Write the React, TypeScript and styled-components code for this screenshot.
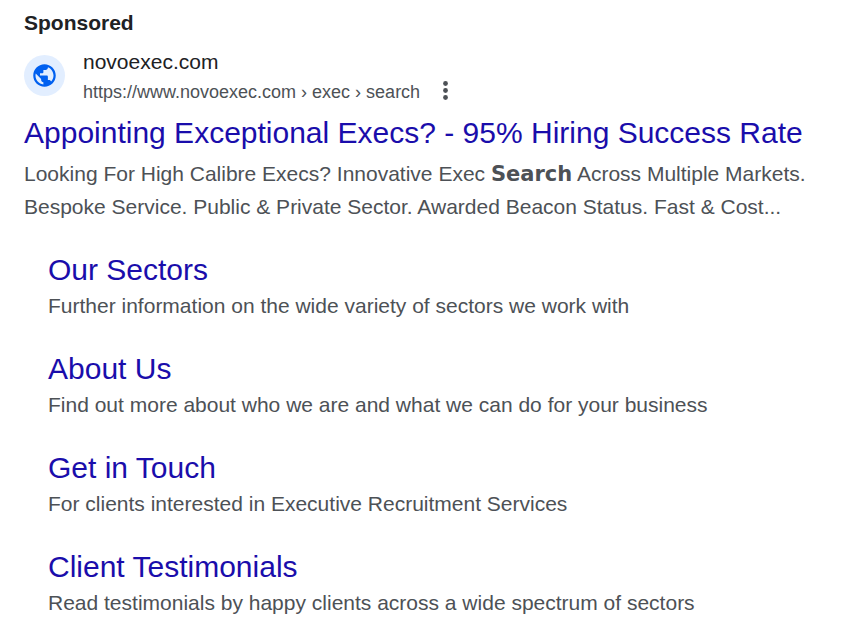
import React from 'react';
import styled, { createGlobalStyle } from 'styled-components';

const GlobalStyle = createGlobalStyle`
  * { box-sizing: border-box; }
  body {
    margin: 0;
    background: #ffffff;
    color: #4d5156;
    font-family: "Liberation Sans", Arial, sans-serif;
  }
`;

const Result = styled.main`
  padding: 8px 24px 8px;
`;

const Label = styled.div`
  color: #202124;
  font-size: 21px;
  line-height: 30px;
  font-weight: 700;
`;

const Source = styled.header`
  display: flex;
  align-items: flex-start;
  gap: 18px;
  margin-top: 9px;
`;

const Favicon = styled.span`
  display: flex;
  flex: none;
  align-items: center;
  justify-content: center;
  width: 41px;
  height: 41px;
  margin-top: 8px;
  border-radius: 50%;
  background: #e2eeff;
`;

const SiteName = styled.div`
  color: #202124;
  font-size: 21px;
  line-height: 30px;
`;

const AddressRow = styled.div`
  display: flex;
  align-items: center;
  gap: 16px;
`;

const Address = styled.cite`
  font-size: 18px;
  line-height: 30px;
  font-style: normal;
`;

const MenuButton = styled.button`
  display: flex;
  padding: 0;
  border: 0;
  background: none;
  color: #4d5156;
  cursor: pointer;
`;

const TitleLink = styled.a`
  display: block;
  color: #1a0dab;
  font-size: 30px;
  line-height: 39px;
  text-decoration: none;
  &:hover { text-decoration: underline; }
`;

const Headline = styled.h3`
  margin: 6px 0 5px;
  font-weight: 400;
`;

const Description = styled.p`
  margin: 0;
  font-size: 21px;
  line-height: 33px;
`;

const Strong = styled.strong`
  font-family: "Arial Black", "DejaVu Sans", sans-serif;
  font-weight: 900;
  line-height: 1;
`;

const Sitelinks = styled.ul`
  display: flex;
  flex-direction: column;
  gap: 27px;
  margin: 27px 0 0;
  padding: 0 0 0 24px;
  list-style: none;
`;

const links = [
  ['Our Sectors', 'Further information on the wide variety of sectors we work with'],
  ['About Us', 'Find out more about who we are and what we can do for your business'],
  ['Get in Touch', 'For clients interested in Executive Recruitment Services'],
  ['Client Testimonials', 'Read testimonials by happy clients across a wide spectrum of sectors'],
];

export default function App() {
  return (
    <>
      <GlobalStyle />
      <Result>
        <Label>Sponsored</Label>
        <Source>
          <Favicon>
            <svg width="27" height="27" viewBox="0 0 24 24" fill="#0060f0" aria-hidden="true">
              <path d="M12 2C6.48 2 2 6.48 2 12s4.48 10 10 10 10-4.48 10-10S17.52 2 12 2zm-1 17.93c-3.95-.49-7-3.85-7-7.93 0-.62.08-1.21.21-1.79L9 15v1c0 1.1.9 2 2 2v1.93zm6.9-2.54c-.26-.81-1-1.39-1.9-1.39h-1v-3c0-.55-.45-1-1-1H8v-2h2c.55 0 1-.45 1-1V7h2c1.1 0 2-.9 2-2v-.41c2.93 1.19 5 4.06 5 7.41 0 2.08-.8 3.97-2.1 5.39z" />
            </svg>
          </Favicon>
          <div>
            <SiteName>novoexec.com</SiteName>
            <AddressRow>
              <Address>https://www.novoexec.com › exec › search</Address>
              <MenuButton type="button" aria-label="About this result">
                <svg width="20" height="24" viewBox="0 0 20 24" fill="currentColor" aria-hidden="true">
                  <circle cx="9.5" cy="3.5" r="2.4" />
                  <circle cx="9.5" cy="10.5" r="2.4" />
                  <circle cx="9.5" cy="17.5" r="2.4" />
                </svg>
              </MenuButton>
            </AddressRow>
          </div>
        </Source>
        <Headline>
          <TitleLink href="#">Appointing Exceptional Execs? - 95% Hiring Success Rate</TitleLink>
        </Headline>
        <Description>
          Looking For High Calibre Execs? Innovative Exec <Strong>Search</Strong> Across Multiple Markets.
          Bespoke Service. Public &amp; Private Sector. Awarded Beacon Status. Fast &amp; Cost...
        </Description>
        <Sitelinks>
          {links.map(([title, text]) => (
            <li key={title}>
              <TitleLink href="#">{title}</TitleLink>
              <Description>{text}</Description>
            </li>
          ))}
        </Sitelinks>
      </Result>
    </>
  );
}
